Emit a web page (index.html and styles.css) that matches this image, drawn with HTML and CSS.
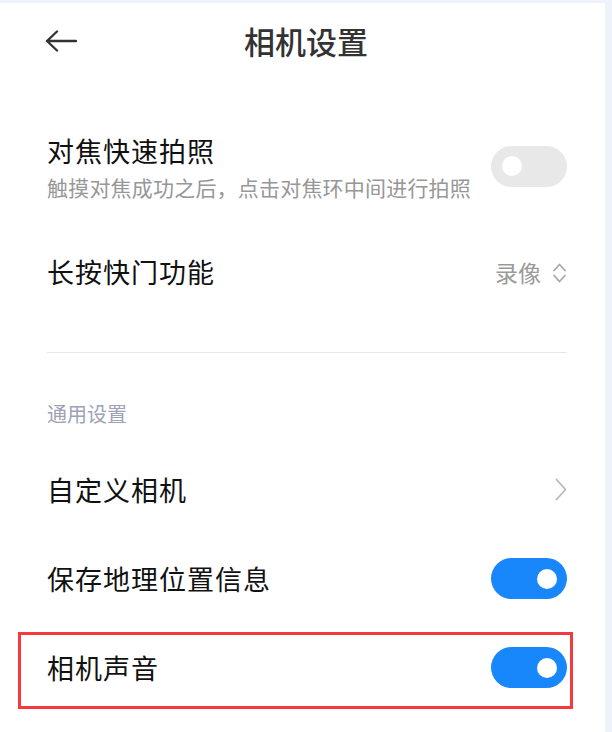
FILE: index.html
```html
<!DOCTYPE html>
<html lang="zh-CN">
<head>
  <meta charset="UTF-8">
  <title>相机设置</title>
  <link rel="stylesheet" href="styles.css">
</head>
<body>
  <div class="page">

    <!-- HEADER -->
    <div class="header">
      <svg class="back" width="32" height="22" viewBox="0 0 32 22">
        <path d="M31 11 H2 M12 1.5 L2 11 L12 20.5" fill="none" stroke="#333" stroke-width="2.4" stroke-linecap="round" stroke-linejoin="round"/>
      </svg>
      <div class="title">相机设置</div>
      <div></div>
    </div>

    <!-- CAMERA OPTIONS -->
    <div class="list">
      <div class="row row-tall">
        <div class="text">
          <div class="label">对焦快速拍照</div>
          <div class="desc">触摸对焦成功之后，点击对焦环中间进行拍照</div>
        </div>
        <div class="switch"><span class="knob"></span></div>
      </div>

      <div class="row row-tall">
        <div class="label">长按快门功能</div>
        <div class="value">
          录像
          <svg width="15" height="22" viewBox="0 0 15 22">
            <path d="M2 8.5 L7.5 2.5 L13 8.5 M2 13.5 L7.5 19.5 L13 13.5" fill="none" stroke="#a8a8a8" stroke-width="1.8" stroke-linecap="round" stroke-linejoin="round"/>
          </svg>
        </div>
      </div>

      <div class="divider"></div>

      <!-- GENERAL -->
      <div class="section">通用设置</div>

      <div class="row">
        <div class="label">自定义相机</div>
        <svg width="12" height="23" viewBox="0 0 12 23">
          <path d="M1.5 1.5 L10.5 11.5 L1.5 21.5" fill="none" stroke="#b8b8b8" stroke-width="1.8" stroke-linecap="round" stroke-linejoin="round"/>
        </svg>
      </div>

      <div class="row">
        <div class="label">保存地理位置信息</div>
        <div class="switch on"><span class="knob"></span></div>
      </div>

      <div class="row marked">
        <div class="label">相机声音</div>
        <div class="switch on"><span class="knob"></span></div>
      </div>
    </div>

  </div>
</body>
</html>
```

FILE: styles.css
```css
body {
  margin: 0;
  background: #eef3fa;
  font-family: "Noto Sans CJK SC", "Noto Sans", sans-serif;
  color: #141414;
}
.page {
  background: #fff;
  margin: 3px 7px 0 0;
  height: 729px;
  overflow: hidden;
}
.header {
  height: 76px;
  display: grid;
  grid-template-columns: 1fr auto 1fr;
  align-items: center;
  padding: 0 38px 0 45px;
}
.back {
  display: block;
}
.title {
  font-size: 31px;
  font-weight: 500;
  color: #333;
  line-height: 40px;
}
.list {
  padding-top: 34px;
}
.row {
  height: 89px;
  padding: 0 38px 0 47px;
  display: flex;
  align-items: center;
  justify-content: space-between;
}
.row-tall {
  height: 106px;
}
.text {
  padding-top: 5px;
}
.label {
  font-size: 27px;
  letter-spacing: 1px;
  line-height: 36px;
  color: #111;
}
.desc {
  font-size: 21px;
  letter-spacing: 0.2px;
  line-height: 36px;
  color: #979797;
}
.value {
  display: flex;
  align-items: center;
  gap: 11px;
  font-size: 23px;
  color: #9a9a9a;
}
.value svg {
  margin-top: 1px;
}
.divider {
  height: 1px;
  background: #e8e8e8;
  margin: 27px 38px 0 47px;
}
.section {
  margin-top: 47px;
  padding-left: 47px;
  font-size: 20px;
  line-height: 28px;
  color: #9da2b6;
  margin-bottom: 17px;
}
.switch {
  width: 76px;
  height: 41px;
  border-radius: 21px;
  background: #e8e8e8;
  position: relative;
  flex-shrink: 0;
}
.knob {
  position: absolute;
  top: 10.5px;
  left: 11px;
  width: 20px;
  height: 20px;
  border-radius: 50%;
  background: #fff;
}
.switch.on {
  background: #1787fb;
}
.switch.on .knob {
  left: auto;
  right: 10px;
}
.marked {
  position: relative;
}
.marked::after {
  content: "";
  position: absolute;
  left: 18px;
  right: 32px;
  top: 8.5px;
  bottom: 3.5px;
  border: 3px solid #f5393c;
  pointer-events: none;
}
```
